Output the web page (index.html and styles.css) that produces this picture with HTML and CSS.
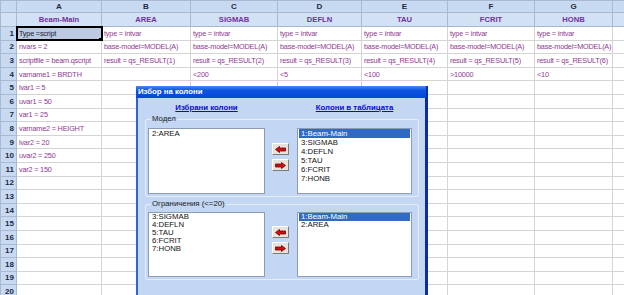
FILE: index.html
```html
<!DOCTYPE html>
<html lang="bg">
<head>
    <meta charset="UTF-8">
    <title>Избор на колони</title>
    <link rel="stylesheet" href="styles.css">
</head>
<body>

<!-- Таблица -->
<table class="sheet">
    <colgroup>
        <col class="c-row"><col class="c-a"><col class="c-b"><col class="c-c"><col class="c-d"><col class="c-e"><col class="c-f"><col class="c-g"><col class="c-h">
    </colgroup>
    <tr class="letters">
        <th></th><th>A</th><th>B</th><th>C</th><th>D</th><th>E</th><th>F</th><th>G</th><th></th>
    </tr>
    <tr class="names">
        <th></th><th>Beam-Main</th><th>AREA</th><th>SIGMAB</th><th>DEFLN</th><th>TAU</th><th>FCRIT</th><th>HONB</th><th></th>
    </tr>
    <tr>
        <th>1</th><td class="sel">Type =script</td><td>type = intvar</td><td>type = intvar</td><td>type = intvar</td><td>type = intvar</td><td>type = intvar</td><td>type = intvar</td><td></td>
    </tr>
    <tr>
        <th>2</th><td>nvars = 2</td><td>base-model=MODEL(A)</td><td>base-model=MODEL(A)</td><td>base-model=MODEL(A)</td><td>base-model=MODEL(A)</td><td>base-model=MODEL(A)</td><td>base-model=MODEL(A)</td><td></td>
    </tr>
    <tr>
        <th>3</th><td>scriptfile = beam.qscript</td><td>result = qs_RESULT(1)</td><td>result = qs_RESULT(2)</td><td>result = qs_RESULT(3)</td><td>result = qs_RESULT(4)</td><td>result = qs_RESULT(5)</td><td>result = qs_RESULT(6)</td><td></td>
    </tr>
    <tr>
        <th>4</th><td>varname1 = BRDTH</td><td></td><td>&lt;200</td><td>&lt;5</td><td>&lt;100</td><td>&gt;10000</td><td>&lt;10</td><td></td>
    </tr>
    <tr><th>5</th><td>lvar1 = 5</td><td></td><td></td><td></td><td></td><td></td><td></td><td></td></tr>
    <tr><th>6</th><td>uvar1 = 50</td><td></td><td></td><td></td><td></td><td></td><td></td><td></td></tr>
    <tr><th>7</th><td>var1 = 25</td><td></td><td></td><td></td><td></td><td></td><td></td><td></td></tr>
    <tr><th>8</th><td>varname2 = HEIGHT</td><td></td><td></td><td></td><td></td><td></td><td></td><td></td></tr>
    <tr><th>9</th><td>lvar2 = 20</td><td></td><td></td><td></td><td></td><td></td><td></td><td></td></tr>
    <tr><th>10</th><td>uvar2 = 250</td><td></td><td></td><td></td><td></td><td></td><td></td><td></td></tr>
    <tr><th>11</th><td>var2 = 150</td><td></td><td></td><td></td><td></td><td></td><td></td><td></td></tr>
    <tr><th>12</th><td></td><td></td><td></td><td></td><td></td><td></td><td></td><td></td></tr>
    <tr><th>13</th><td></td><td></td><td></td><td></td><td></td><td></td><td></td><td></td></tr>
    <tr><th>14</th><td></td><td></td><td></td><td></td><td></td><td></td><td></td><td></td></tr>
    <tr><th>15</th><td></td><td></td><td></td><td></td><td></td><td></td><td></td><td></td></tr>
    <tr><th>16</th><td></td><td></td><td></td><td></td><td></td><td></td><td></td><td></td></tr>
    <tr><th>17</th><td></td><td></td><td></td><td></td><td></td><td></td><td></td><td></td></tr>
    <tr><th>18</th><td></td><td></td><td></td><td></td><td></td><td></td><td></td><td></td></tr>
    <tr><th>19</th><td></td><td></td><td></td><td></td><td></td><td></td><td></td><td></td></tr>
    <tr><th>20</th><td></td><td></td><td></td><td></td><td></td><td></td><td></td><td></td></tr>
</table>

<!-- Диалог -->
<div class="dialog">
    <div class="dialog-title">Избор на колони</div>
    <div class="dialog-body">
        <div class="links">
            <a class="link link-left">Избрани колони</a>
            <a class="link link-right">Колони в таблицата</a>
        </div>

        <fieldset class="group group-model">
            <legend>Модел</legend>
            <div class="group-row">
                <ul class="listbox listbox-left">
                    <li>2:AREA</li>
                </ul>
                <div class="buttons">
                    <button class="arrow">
                        <svg width="11" height="7" viewBox="0 0 11 7"><polygon points="0.5,3.5 4.5,0.5 4.5,2 10.5,2 10.5,5 4.5,5 4.5,6.5" fill="#d01010" stroke="#6a0000" stroke-width="0.8"/></svg>
                    </button>
                    <button class="arrow">
                        <svg width="11" height="7" viewBox="0 0 11 7"><polygon points="10.5,3.5 6.5,0.5 6.5,2 0.5,2 0.5,5 6.5,5 6.5,6.5" fill="#d01010" stroke="#6a0000" stroke-width="0.8"/></svg>
                    </button>
                </div>
                <ul class="listbox listbox-right">
                    <li class="selected">1:Beam-Main</li>
                    <li>3:SIGMAB</li>
                    <li>4:DEFLN</li>
                    <li>5:TAU</li>
                    <li>6:FCRIT</li>
                    <li>7:HONB</li>
                </ul>
            </div>
        </fieldset>

        <fieldset class="group group-limits">
            <legend>Ограничения (&lt;=20)</legend>
            <div class="group-row">
                <ul class="listbox listbox-left">
                    <li>3:SIGMAB</li>
                    <li>4:DEFLN</li>
                    <li>5:TAU</li>
                    <li>6:FCRIT</li>
                    <li>7:HONB</li>
                </ul>
                <div class="buttons">
                    <button class="arrow">
                        <svg width="11" height="7" viewBox="0 0 11 7"><polygon points="0.5,3.5 4.5,0.5 4.5,2 10.5,2 10.5,5 4.5,5 4.5,6.5" fill="#d01010" stroke="#6a0000" stroke-width="0.8"/></svg>
                    </button>
                    <button class="arrow">
                        <svg width="11" height="7" viewBox="0 0 11 7"><polygon points="10.5,3.5 6.5,0.5 6.5,2 0.5,2 0.5,5 6.5,5 6.5,6.5" fill="#d01010" stroke="#6a0000" stroke-width="0.8"/></svg>
                    </button>
                </div>
                <ul class="listbox listbox-right">
                    <li class="selected">1:Beam-Main</li>
                    <li>2:AREA</li>
                </ul>
            </div>
        </fieldset>
    </div>
</div>

</body>
</html>
```

FILE: styles.css
```css
body {
    margin: 0;
    background-color: #fff;
    font-family: "Liberation Sans", Arial, sans-serif;
    overflow: hidden;
    width: 624px;
    height: 295px;
}

/* Таблица */
.sheet {
    border-collapse: collapse;
    table-layout: fixed;
    width: 624px;
}

.c-row { width: 16px; }
.c-a { width: 85px; }
.c-b { width: 89px; }
.c-c { width: 87px; }
.c-d { width: 84px; }
.c-e { width: 86px; }
.c-f { width: 87px; }
.c-g { width: 78px; }
.c-h { width: 12px; }

.sheet tr {
    height: 13.6px;
}

.sheet td {
    border: 1px solid #d4d4d4;
    padding: 0 0 0 2px;
    font-size: 7.3px;
    letter-spacing: -0.2px;
    color: #8e3a92;
    white-space: nowrap;
    overflow: hidden;
    line-height: 11px;
}

.sheet th {
    background-color: #c8daf1;
    border: 1px solid #a9b9d2;
    font-size: 8px;
    font-weight: bold;
    color: #1c2848;
    padding: 0 2px 0 0;
    text-align: right;
    line-height: 11px;
    white-space: nowrap;
    overflow: hidden;
}

.sheet .letters {
    height: 12px;
}

.sheet .letters th {
    text-align: center;
    padding: 0;
    color: #202a40;
}

.sheet .names {
    height: 14px;
}

.sheet .names th {
    background-color: #d3e1f4;
    text-align: center;
    padding: 0;
    font-size: 7.6px;
    color: #7030a0;
}

.sheet td.sel {
    position: relative;
    background-color: #bccbe2;
    color: #1a1f33;
    outline: 2px solid #000;
    outline-offset: -1px;
}

.sheet td.sel::after {
    content: "";
    position: absolute;
    right: -1px;
    bottom: -1px;
    width: 3px;
    height: 3px;
    background-color: #000;
}

/* Диалог */
.dialog {
    position: absolute;
    left: 136px;
    top: 86px;
    width: 292px;
    height: 215px;
    display: flex;
    flex-direction: column;
}

.dialog-title {
    height: 12px;
    line-height: 12px;
    padding-left: 2px;
    background: linear-gradient(#4a8af4, #0c55e2 35%, #0648d2);
    color: #fff;
    font-size: 7.8px;
    font-weight: bold;
    border-right: 2px solid #0a2fa0;
}

.dialog-body {
    flex: 1;
    background-color: #c3d6f3;
    border-left: 2px solid #2b63dc;
    border-right: 3px solid #0b2fa3;
    padding: 0 6px 0 7px;
}

.links {
    display: flex;
    height: 16px;
    padding-top: 5px;
    box-sizing: border-box;
    margin-left: 3px;
}

.link {
    font-size: 7.8px;
    font-weight: bold;
    line-height: 10px;
    color: #0a0ad0;
    text-decoration: underline;
    text-align: center;
    white-space: nowrap;
}

.link-left {
    width: 117px;
}

.link-right {
    width: 115px;
    margin-left: 32px;
}

.group {
    margin: 0;
    border: 1px solid #e4edfa;
    border-radius: 2px;
    padding: 4px 6px 2px 2px;
    min-width: 0;
}

.group legend {
    font-size: 7.8px;
    line-height: 10px;
    padding: 0 1px;
    margin-left: 3px;
    color: #1a1a1a;
}

.group-limits {
    margin-top: 2px;
    padding-top: 3px;
}

.group-row {
    display: flex;
}

.listbox {
    list-style: none;
    margin: 0;
    padding: 0;
    background-color: #fff;
    border: 1px solid #8e9cb2;
    box-sizing: border-box;
}

.group-model .listbox {
    height: 66px;
}

.group-limits .listbox {
    height: 65px;
}

.listbox-left {
    width: 117px;
}

.listbox-right {
    width: 115px;
}

.listbox li {
    font-size: 7.8px;
    line-height: 9px;
    padding-left: 2px;
    margin: 0 1px;
    color: #111;
    white-space: nowrap;
}

.group-limits .listbox li {
    line-height: 8px;
}

.listbox li.selected {
    background-color: #316ac5;
    color: #fff;
}

.buttons {
    width: 17px;
    margin: 0 8px 0 7px;
    display: flex;
    flex-direction: column;
    gap: 4px;
    padding-top: 15px;
}

.group-limits .buttons {
    padding-top: 14px;
}

.arrow {
    width: 17px;
    height: 12px;
    padding: 0;
    background-color: #e6e3dc;
    border: 1px solid;
    border-color: #fff #7c7c7c #7c7c7c #fff;
    display: flex;
    align-items: center;
    justify-content: center;
}

.arrow svg {
    display: block;
}
```
